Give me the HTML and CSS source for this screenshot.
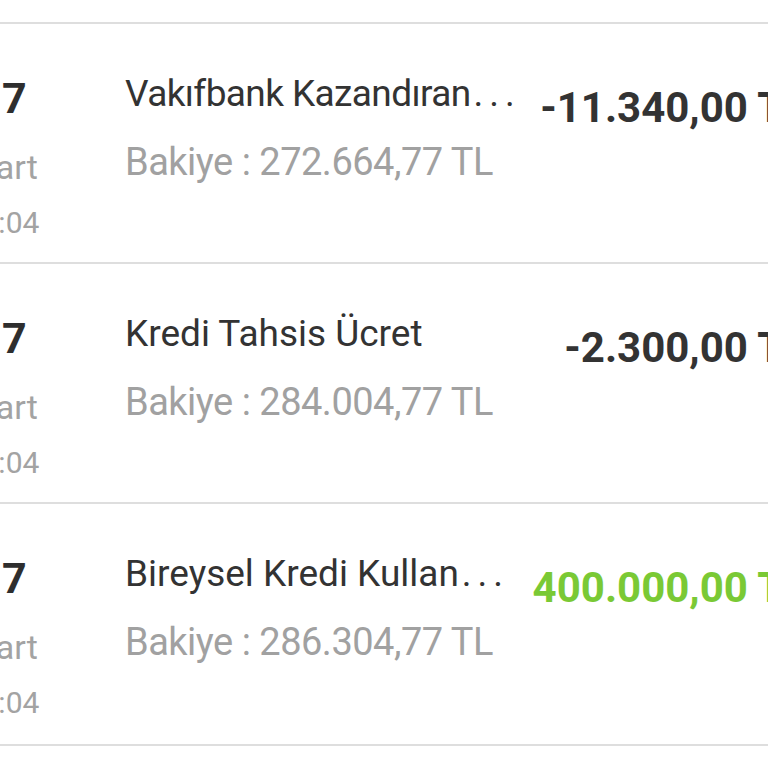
FILE: index.html
```html
<!DOCTYPE html>
<html lang="tr">
<head>
<meta charset="utf-8">
<title>Hesap Hareketleri</title>
<link rel="stylesheet" href="styles.css">
</head>
<body>
<div class="list">
  <div class="row">
    <div class="date">
      <div class="day">17</div>
      <div class="month">Mart</div>
      <div class="time">14:04</div>
    </div>
    <div class="info">
      <div class="title tight">Vakıfbank Kazandıran<span class="dots">...</span></div>
      <div class="balance">Bakiye : 272.664,77 TL</div>
    </div>
    <div class="amount">-11.340,00 TL</div>
  </div>
  <div class="row">
    <div class="date">
      <div class="day">17</div>
      <div class="month">Mart</div>
      <div class="time">14:04</div>
    </div>
    <div class="info">
      <div class="title">Kredi Tahsis Ücret</div>
      <div class="balance">Bakiye : 284.004,77 TL</div>
    </div>
    <div class="amount">-2.300,00 TL</div>
  </div>
  <div class="row last">
    <div class="date">
      <div class="day">17</div>
      <div class="month">Mart</div>
      <div class="time">14:04</div>
    </div>
    <div class="info">
      <div class="title">Bireysel Kredi Kullan<span class="dots">...</span></div>
      <div class="balance">Bakiye : 286.304,77 TL</div>
    </div>
    <div class="amount positive">400.000,00 TL</div>
  </div>
</div>
</body>
</html>
```

FILE: styles.css
```css
html, body {
  margin: 0;
  padding: 0;
  background: #ffffff;
  overflow: hidden;
  width: 768px;
  height: 768px;
}

body {
  font-family: Roboto, "Noto Sans", sans-serif;
}

.list {
  margin-top: 22px;
  margin-left: -48px;
  width: 854px;
  border-top: 2px solid #dedede;
}

.row {
  display: flex;
  height: 238px;
  border-bottom: 2px solid #dedede;
  box-sizing: content-box;
}

.row.last {
  height: 240px;
}

.date {
  width: 100px;
  flex: none;
  text-align: center;
  padding-top: 49px;
  white-space: nowrap;
}

.day {
  font-size: 43px;
  line-height: 50px;
  font-weight: 700;
  color: #2e2e2e;
}

.month {
  margin-top: 22px;
  font-size: 34px;
  line-height: 44px;
  color: #a3a3a3;
}

.time {
  margin-top: 16px;
  font-size: 30px;
  line-height: 36px;
  color: #a3a3a3;
}

.info {
  flex: 1;
  padding-left: 73px;
  padding-top: 48px;
  white-space: nowrap;
}

.title {
  font-size: 37px;
  line-height: 44px;
  color: #333333;
}

.title.tight {
  letter-spacing: -0.6px;
}

.dots {
  letter-spacing: 6px;
  margin-left: 3px;
}

.balance {
  margin-top: 24px;
  font-size: 38px;
  line-height: 44px;
  letter-spacing: -0.5px;
  color: #a1a1a1;
}

.amount {
  flex: none;
  padding-top: 59px;
  font-size: 42px;
  line-height: 50px;
  font-weight: 700;
  color: #333333;
  white-space: nowrap;
  text-align: right;
}

.amount.positive {
  color: #7ac935;
}
```
